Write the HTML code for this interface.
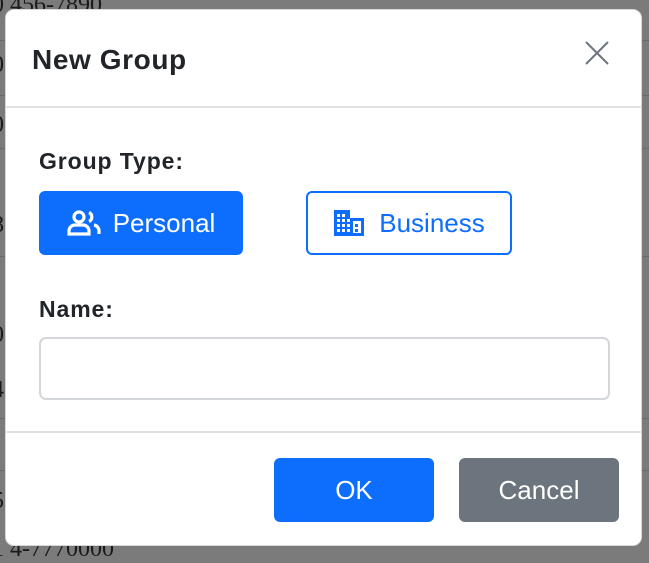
<!DOCTYPE html>
<html><head><meta charset="utf-8"><style>
body{margin:0;width:649px;height:553px;overflow:hidden;background:#7b7b7b;font-family:"Liberation Sans",sans-serif;position:relative}
.bgt{position:absolute;left:-8px;color:#1a1a1a;font-size:24px;font-family:"Liberation Serif",serif}
.line{position:absolute;left:0;width:649px;height:1px;background:#6a6a6a}
.modal{position:absolute;left:5px;top:9px;width:637px;height:537px;background:#fff;border-radius:9px;border:1px solid #d5d7da;box-sizing:border-box}
.a{position:absolute}
.title{left:26px;top:34px;font-size:28px;color:#212529;font-weight:bold;letter-spacing:0.6px}
.hr{left:0;width:635px;height:2px;background:#dee2e6}
.lbl{font-size:23px;color:#212529;font-weight:bold;letter-spacing:0.9px}
.btn{border-radius:6px;box-sizing:border-box;display:flex;align-items:center;justify-content:center;font-size:26px}
</style></head><body>
<div class="bgt" style="top:-8px">0 456-7890</div>
<div class="bgt" style="top:52px">0</div>
<div class="bgt" style="top:112px">0</div>
<div class="bgt" style="top:212px">8</div>
<div class="bgt" style="top:322px">0</div>
<div class="bgt" style="top:377px">4</div>
<div class="bgt" style="top:488px">5</div>
<div class="bgt" style="top:536px">1 4-7770000</div>
<div class="line" style="top:40px"></div><div class="line" style="top:95px"></div><div class="line" style="top:148px"></div><div class="line" style="top:256px"></div><div class="line" style="top:418px"></div><div class="line" style="top:470px"></div>
<div class="modal">
<div class="a title">New Group</div>
<svg class="a" style="left:579px;top:31px" width="24" height="24" viewBox="0 0 24 24"><path d="M1 1L23 23M23 1L1 23" stroke="#6c757d" stroke-width="2"/></svg>
<div class="a hr" style="top:96px"></div>
<div class="a lbl" style="left:33px;top:138px">Group Type:</div>
<div class="a btn" style="left:33px;top:181px;width:204px;height:64px;background:#0d6efd;color:#fff">
<svg width="36" height="26" viewBox="0 0 36 26" style="margin-right:10px"><g fill="none" stroke="#fff" stroke-width="3.2"><circle cx="12" cy="7" r="5"/><path d="M2 24v-3a6 6 0 0 1 6-6h8a6 6 0 0 1 6 6v3z"/><path d="M22 2.5a5 5 0 0 1 0 9"/><path d="M27 15a6 6 0 0 1 5 6v3"/></g></svg>Personal</div>
<div class="a btn" style="left:300px;top:181px;width:206px;height:64px;border:2px solid #0d6efd;color:#0d6efd">
<svg width="32" height="28" viewBox="0 0 32 28" style="margin-right:14px"><path fill="#0d6efd" fill-rule="evenodd" d="M1 1h16v8h14v18H1z M4 5h3v3H4z M9 5h3v3H9z M4 10h3v3H4z M9 10h3v3H9z M4 15h3v3H4z M9 15h3v3H9z M4 20h3v3H4z M9 20h3v3H9z M14 10h3v3h-3z M14 15h3v3h-3z M14 20h3v3h-3z M20 12h8v12h-8z"/><rect x="22" y="15" width="3" height="3" fill="#0d6efd"/><rect x="22" y="20" width="3" height="3" fill="#0d6efd"/></svg>Business</div>
<div class="a lbl" style="left:33px;top:286px">Name:</div>
<div class="a" style="left:33px;top:327px;width:571px;height:63px;border:2px solid #d3d6da;border-radius:7px;box-sizing:border-box"></div>
<div class="a hr" style="top:421px"></div>
<div class="a btn" style="left:268px;top:448px;width:160px;height:64px;background:#0d6efd;color:#fff">OK</div>
<div class="a btn" style="left:453px;top:448px;width:160px;height:64px;background:#6c757d;color:#fff">Cancel</div>
</div>
</body></html>
